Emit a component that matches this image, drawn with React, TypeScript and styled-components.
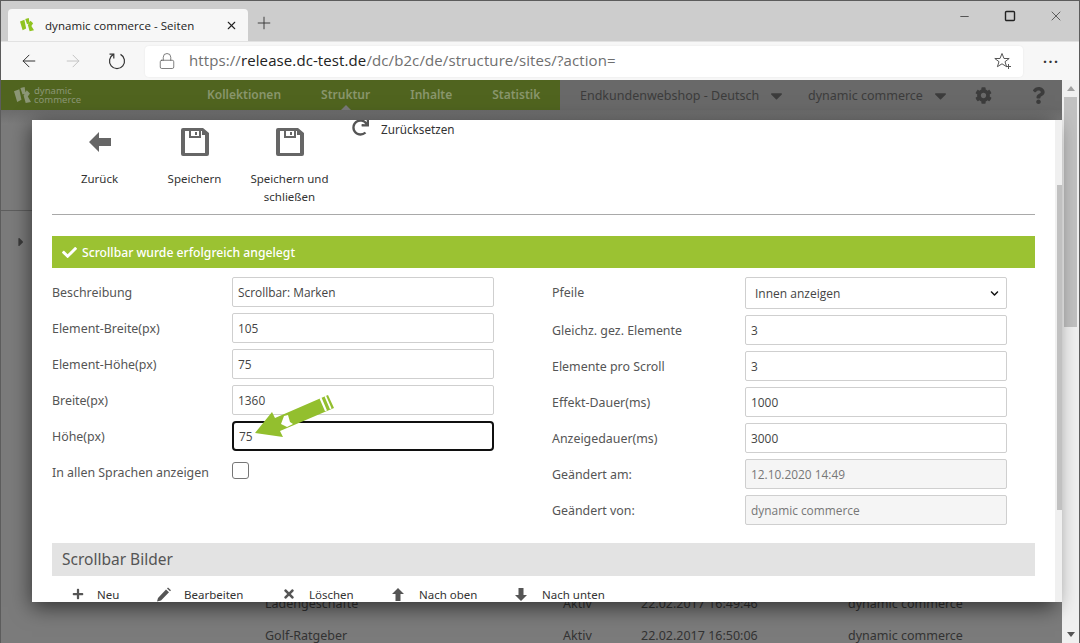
import React from 'react';
import styled, { createGlobalStyle } from 'styled-components';
import { Plus, X, Minus, Square, ArrowLeft, ArrowRight, Lock } from 'lucide-react';
import { FaCheck, FaCog, FaTimes, FaPlus, FaRedo, FaQuestion, FaCaretDown, FaCaretRight, FaChevronDown } from 'react-icons/fa';

const Global = createGlobalStyle`
  html, body { margin: 0; padding: 0; overflow: hidden; background: #fff; }
  * { box-sizing: border-box; }
`;
const SANS = `"Noto Sans", "Open Sans", sans-serif`;
const UI = `"Open Sans", "Noto Sans", sans-serif`;

const Window = styled.div`
  width: 1080px; height: 643px; display: flex; flex-direction: column; overflow: hidden;
  border: 1px solid #5c5c5c; border-bottom: 0; background: #cdcdcd;
`;
const TabStrip = styled.div`
  height: 40px; flex: none; display: flex; align-items: flex-end; padding-left: 7px; background: #cdcdcd;
`;
const Tab = styled.div`
  width: 240px; height: 32px; background: #f7f7f7; border-radius: 4px 4px 0 0; display: flex; align-items: center;
  padding: 0 10px 0 12px; font: 11.5px ${UI}; color: #222;
`;
const TabTitle = styled.span` margin-left: 11px; flex: 1; white-space: nowrap; letter-spacing: .05px; `;
const NewTab = styled.div` margin: 0 0 4px 2px; height: 28px; width: 28px; display: flex; align-items: center; justify-content: center; color: #333; `;
const WinControls = styled.div`
  margin-left: auto; align-self: flex-start; display: flex; height: 30px; color: #222;
`;
const WinBtn = styled.div` width: 46px; height: 30px; display: flex; align-items: center; justify-content: center; `;
const AddressBar = styled.div`
  height: 39px; flex: none; background: #f7f7f7; border-top: 1px solid #e2e2e2; display: flex; align-items: center; padding-left: 6px;
`;
const NavBtn = styled.div<{ $off?: boolean }>`
  width: 44px; height: 32px; display: flex; align-items: center; justify-content: center; color: ${p => (p.$off ? '#c4c4c4' : '#333')};
`;
const UrlField = styled.div`
  width: 878px; height: 31px; margin-left: 6px; background: #fff; border-radius: 4px; display: flex; align-items: center;
  padding: 0 11px 0 13px; box-shadow: 0 0 2px rgba(0,0,0,.08); color: #555;
`;
const Url = styled.div` margin-left: 13px; padding-bottom: 2px; font: 15px ${UI}; color: #6f6f6f; flex: 1; white-space: nowrap; letter-spacing: .1px; b { font-weight: 400; color: #222; } `;
const More = styled.div` margin-left: 20px; font: 700 14px ${UI}; color: #333; letter-spacing: 1.5px; margin-top: -8px; `;

const Page = styled.div` flex: 1; display: flex; position: relative; min-height: 0; `;
const PageMain = styled.div` flex: 1; display: flex; flex-direction: column; min-width: 0; background: #797979; overflow: hidden; `;
const TopNav = styled.div` height: 30px; flex: none; display: flex; background: #50641f; `;
const LogoBox = styled.div` width: 206px; padding-left: 13px; display: flex; align-items: center; color: #8b9675; font: 9.5px/9px ${SANS}; `;
const LogoText = styled.span` margin-left: 3px; `;
const Menu = styled.div` display: flex; gap: 40px; width: 353px; `;
const MenuItem = styled.div<{ $active?: boolean }>`
  position: relative; font: 600 12px/30px ${SANS}; color: #89966c; white-space: nowrap;
  ${p => p.$active ? `&:after { content: ''; position: absolute; left: 50%; margin-left: -5px; bottom: 0; border: 5px solid transparent; border-top: 0; border-bottom-color: #797979; }` : ''}
`;
const NavRight = styled.div`
  flex: 1; background: #696969; display: flex; align-items: center; padding-left: 20px; color: #3c3c3c; font: 12.5px ${SANS};
`;
const DropLabel = styled.span` white-space: nowrap; `;
const Drop = styled.div<{ $w: number }>` width: ${p => p.$w}px; display: flex; align-items: center; gap: 8px; `;
const Backdrop = styled.div` flex: 1; position: relative; background: linear-gradient(#6c6c6c, #7b7b7b 14px); `;
const SubHeader = styled.div` height: 101px; border-bottom: 1px solid #5e5e5e; `;
const Side = styled.div` height: 376px; padding: 24px 0 0 13px; color: #3a3a3a; font-size: 14px; `;
const Row = styled.div`
  height: 32px; display: grid; grid-template-columns: 298px 78px 207px 1fr; padding-left: 264px; align-items: center;
  font: 12.5px ${SANS}; color: #333; white-space: nowrap;
`;
const OuterScroll = styled.div` width: 17px; flex: none; background: #f0f0f0; display: flex; flex-direction: column; align-items: center; `;
const ScrollArrow = styled.div<{ $down?: boolean }>`
  height: 17px; flex: none; width: 100%; display: flex; align-items: center; justify-content: center;
  &:after { content: ''; border: 4px solid transparent; ${p => (p.$down ? 'border-bottom: 0; border-top: 5px solid #555;' : 'border-top: 0; border-bottom: 5px solid #a0a0a0;')} }
`;
const OuterThumb = styled.div` width: 13px; height: 230px; background: #c1c1c1; `;
const Spacer = styled.div` flex: 1; `;

const Modal = styled.div`
  position: absolute; left: 31px; top: 40px; width: 1030px; height: 482px; background: #fff; display: flex; overflow: hidden;
  font: 12.5px ${SANS}; color: #333;
`;
const ModalShadow = styled.div`
  position: absolute; left: 31px; top: 40px; width: 1023px; height: 482px; box-shadow: 0 5px 20px rgba(0,0,0,.6);
`;
const Content = styled.div` flex: 1; min-width: 0; padding: 0 20px; position: relative; `;
const Track = styled.div` width: 7px; flex: none; background: #f0f0f0; padding: 65px 0 0 2px; `;
const Thumb = styled.div` width: 5px; height: 325px; background: #c1c1c1; `;
const Toolbar = styled.div` height: 95px; display: flex; border-bottom: 1px solid #a9a9a9; align-items: flex-start; `;
const ToolBtn = styled.div`
  width: 95px; padding-top: 8px; text-align: center; display: flex; flex-direction: column; align-items: center; font: 11.5px/18px ${SANS}; color: #333;
`;
const ToolIcon = styled.div` height: 28px; width: 28px; margin-bottom: 14px; display: flex; align-items: center; justify-content: center; color: #666; `;
const ResetBtn = styled.div` margin-left: 15px; display: flex; align-items: center; gap: 12px; font: 11.7px/18px ${SANS}; color: #333; `;
const ResetGlyph = styled.span` display: flex; margin-top: -3px; color: #555; `;
const Alert = styled.div`
  margin-top: 21px; height: 32px; background: #9bc232; color: #fff; display: flex; align-items: center; gap: 5px; padding-left: 10px; font: 500 12.2px ${SANS};
`;
const FormGrid = styled.div` margin-top: 9px; display: grid; grid-template-columns: 500px 483px; `;
const FormCol = styled.div` display: flex; flex-direction: column; gap: 6px; `;
const Field = styled.div<{ $label: number }>` display: grid; grid-template-columns: ${p => p.$label}px 262px; align-items: center; `;
const Label = styled.label` font: 12.4px ${SANS}; color: #555; white-space: nowrap; `;
const SelectLabel = styled(Label)` margin-bottom: 2px; `;
const InputBox = styled.div<{ $ro?: boolean; $focus?: boolean }>`
  height: 30px; position: relative; padding: 0 5px; display: flex; align-items: center;
  border: ${p => (p.$focus ? '2px solid #101010' : '1px solid #cfcfcf')}; border-radius: ${p => (p.$focus ? 4 : 2)}px;
  background: ${p => (p.$ro ? '#f5f5f5' : '#fff')}; color: ${p => (p.$ro ? '#777' : '#444')}; font: 11.9px ${UI};
`;
const SelectBox = styled.div`
  height: 32px; padding: 0 7px 0 9px; display: flex; align-items: center; justify-content: space-between;
  border: 1px solid #cfcfcf; border-radius: 2px; background: #fff; color: #444; font: 12px ${UI};
`;
const Check = styled.div` width: 17px; height: 17px; border: 1px solid #767676; border-radius: 3px; background: #fff; margin-bottom: 4px; `;
const CheckRow = styled.div` height: 30px; display: grid; grid-template-columns: 180px 262px; align-items: center; `;
const Pointer = styled.svg` position: absolute; left: 15px; top: -33px; overflow: visible; pointer-events: none; `;
const Section = styled.div`
  margin-top: 18px; height: 33px; background: #e3e3e3; padding-left: 10px; font: 15.5px/33px ${SANS}; color: #555;
`;
const SubBar = styled.div` margin-top: 9px; padding-left: 20px; display: flex; align-items: center; height: 18px; font: 11.5px ${SANS}; color: #333; `;
const SubBtn = styled.div<{ $w: number }>` width: ${p => p.$w}px; display: flex; align-items: center; color: #333; `;
const SubIcon = styled.span<{ $w: number }>` width: ${p => p.$w}px; color: #555; display: flex; align-items: center; `;

const SaveIcon = () => (
  <svg width="28" height="28" viewBox="0 0 28 28" fill="#666">
    <path fillRule="evenodd" d="M2 0h20l6 5v21a2 2 0 0 1-2 2H2a2 2 0 0 1-2-2V2a2 2 0 0 1 2-2zm2 3v22h20V7h-3V3h-1v7H8V3H4zm6 0v5h8V3h-8zm4 1h2v3h-2z" />
  </svg>
);
const BackIcon = () => (
  <svg width="22" height="20" viewBox="0 0 22 20" fill="#666"><path d="M0 10 10 0v6h12v8H10v6z" /></svg>
);
const UpIcon = ({ down }: { down?: boolean }) => (
  <svg width="12" height="13" viewBox="0 0 12 13" fill="#555" style={down ? { transform: 'rotate(180deg)' } : undefined}><path d="M6 0l6 6H8.500v7h-5V6H0z" /></svg>
);
const PencilIcon = () => (
  <svg width="15" height="17" viewBox="0 0 15 17" fill="#555" style={{ marginBottom: -3 }}>
    <path d="M2 11 10 2.500l3 2.800-8 8.200-4 1zM11 1.500l1-1 3 2.800-1 1z" /><rect x="0" y="15.500" width="14" height="1.500" />
  </svg>
);
const Shards = ({ c, size }: { c: string; size: number }) => (
  <svg width={size} height={size} viewBox="0 0 16 16" fill={c}>
    <path d="M0 4l5-2 2 10-4 2zM6 1l4-1 1 6-3 1zM9 8l3-5 3 3-2 3 3 5-5 1z" />
  </svg>
);
const RefreshIcon = () => (
  <svg width="18" height="18" viewBox="0 0 18 18" fill="none" stroke="#333" strokeWidth="1.2"><path d="M5.500 2.400A7.500 7.500 0 1 0 12.500 2.400" /><path d="M5.800 6.500V2.200H1.500" /></svg>
);
const StarPlus = () => (
  <svg width="18" height="18" viewBox="0 0 18 18" fill="none" stroke="#555" strokeWidth="1"><path d="M8 1.500l2 5h5.200l-4.200 3.200 1.600 5L8 11.800l-4.600 2.900 1.600-5L.8 6.500H6z" /><path d="M14.500 12v5M12 14.500h5" /></svg>
);

const left: [string, string][] = [['Beschreibung', 'Scrollbar: Marken'], ['Element-Breite(px)', '105'], ['Element-Höhe(px)', '75'], ['Breite(px)', '1360']];
const right: [string, string, boolean?][] = [
  ['Gleichz. gez. Elemente', '3'], ['Elemente pro Scroll', '3'], ['Effekt-Dauer(ms)', '1000'], ['Anzeigedauer(ms)', '3000'],
  ['Geändert am:', '12.10.2020 14:49', true], ['Geändert von:', 'dynamic commerce', true],
];

export default function App() {
  return (
    <Window>
      <Global />
      <TabStrip>
        <Tab>
          <Shards c="#8fc31f" size={14} />
          <TabTitle>dynamic commerce - Seiten</TabTitle>
          <X size={13} strokeWidth={2} />
        </Tab>
        <NewTab><Plus size={20} strokeWidth={1.1} /></NewTab>
        <WinControls>
          <WinBtn><Minus size={13} strokeWidth={1.3} /></WinBtn>
          <WinBtn><Square size={12} strokeWidth={1.4} absoluteStrokeWidth /></WinBtn>
          <WinBtn><X size={16} strokeWidth={1} /></WinBtn>
        </WinControls>
      </TabStrip>
      <AddressBar>
        <NavBtn><ArrowLeft size={20} strokeWidth={1.2} /></NavBtn>
        <NavBtn $off><ArrowRight size={20} strokeWidth={1.2} /></NavBtn>
        <NavBtn><RefreshIcon /></NavBtn>
        <UrlField>
          <Lock size={18} strokeWidth={1} />
          <Url>https://<b>release.dc-test.de</b>/dc/b2c/de/structure/sites/?action=</Url>
          <StarPlus />
        </UrlField>
        <More>...</More>
      </AddressBar>
      <Page>
        <PageMain>
          <TopNav>
            <LogoBox>
              <Shards c="#8b9675" size={17} />
              <LogoText>dynamic<br />commerce</LogoText>
            </LogoBox>
            <Menu>
              <MenuItem>Kollektionen</MenuItem>
              <MenuItem $active>Struktur</MenuItem>
              <MenuItem>Inhalte</MenuItem>
              <MenuItem>Statistik</MenuItem>
            </Menu>
            <NavRight>
              <Drop $w={228}><DropLabel>Endkundenwebshop - Deutsch</DropLabel><FaCaretDown size={19} /></Drop>
              <Drop $w={167}><DropLabel>dynamic commerce</DropLabel><FaCaretDown size={19} /></Drop>
              <Drop $w={55}><FaCog size={17} /></Drop>
              <FaQuestion size={17} />
            </NavRight>
          </TopNav>
          <Backdrop>
            <SubHeader />
            <Side><FaCaretRight /></Side>
            <Row><span>Ladengeschäfte</span><span>Aktiv</span><span>22.02.2017 16:49:46</span><span>dynamic commerce</span></Row>
            <Row><span>Golf-Ratgeber</span><span>Aktiv</span><span>22.02.2017 16:50:06</span><span>dynamic commerce</span></Row>
          </Backdrop>
        </PageMain>
        <OuterScroll>
          <ScrollArrow />
          <OuterThumb />
          <Spacer />
          <ScrollArrow $down />
        </OuterScroll>
        <ModalShadow />
        <Modal>
          <Content>
            <Toolbar>
              <ToolBtn><ToolIcon><BackIcon /></ToolIcon>Zurück</ToolBtn>
              <ToolBtn><ToolIcon><SaveIcon /></ToolIcon>Speichern</ToolBtn>
              <ToolBtn><ToolIcon><SaveIcon /></ToolIcon>Speichern und schließen</ToolBtn>
              <ResetBtn><ResetGlyph><FaRedo size={17} /></ResetGlyph>Zurücksetzen</ResetBtn>
            </Toolbar>
            <Alert><FaCheck size={15} />Scrollbar wurde erfolgreich angelegt</Alert>
            <FormGrid>
              <FormCol>
                {left.map(([l, v]) => (
                  <Field key={l} $label={180}><Label>{l}</Label><InputBox>{v}</InputBox></Field>
                ))}
                <Field $label={180}>
                  <Label>Höhe(px)</Label>
                  <InputBox $focus>
                    75
                    <Pointer width="85" height="48" viewBox="249 390 85 48">
                      <path fill="#93bf2e" d="M255 433l17-21 3 6 53-23 6 13-54 23 3 6z" />
                      <path fill="#fff" d="M319.500 398.500l2-.9 5.500 12.800-2 .9zM324.500 396.400l1.600-.7 5.500 12.800-1.600.7z" />
                      <path fill="#fff" d="M281 424l3-8 4-1 2 7 3 2-6 3z" />
                    </Pointer>
                  </InputBox>
                </Field>
                <CheckRow><Label>In allen Sprachen anzeigen</Label><Check /></CheckRow>
              </FormCol>
              <FormCol>
                <Field $label={193}><SelectLabel>Pfeile</SelectLabel><SelectBox>Innen anzeigen<FaChevronDown size={9} color="#111" /></SelectBox></Field>
                {right.map(([l, v, ro]) => (
                  <Field key={l} $label={193}><Label>{l}</Label><InputBox $ro={ro}>{v}</InputBox></Field>
                ))}
              </FormCol>
            </FormGrid>
            <Section>Scrollbar Bilder</Section>
            <SubBar>
              <SubBtn $w={84}><SubIcon $w={25}><FaPlus size={12} /></SubIcon>Neu</SubBtn>
              <SubBtn $w={126}><SubIcon $w={28}><PencilIcon /></SubIcon>Bearbeiten</SubBtn>
              <SubBtn $w={110}><SubIcon $w={27}><FaTimes size={14} /></SubIcon>Löschen</SubBtn>
              <SubBtn $w={123}><SubIcon $w={27}><UpIcon /></SubIcon>Nach oben</SubBtn>
              <SubBtn $w={110}><SubIcon $w={27}><UpIcon down /></SubIcon>Nach unten</SubBtn>
            </SubBar>
          </Content>
          <Track><Thumb /></Track>
        </Modal>
      </Page>
    </Window>
  );
}
